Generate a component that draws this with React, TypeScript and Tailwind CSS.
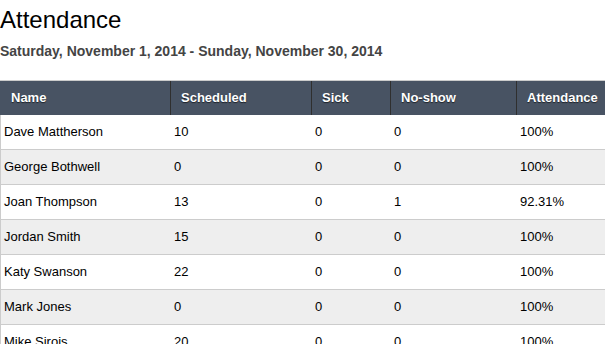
import React from "react";

const rows = [
  ["Dave Mattherson", "10", "0", "0", "100%"],
  ["George Bothwell", "0", "0", "0", "100%"],
  ["Joan Thompson", "13", "0", "1", "92.31%"],
  ["Jordan Smith", "15", "0", "0", "100%"],
  ["Katy Swanson", "22", "0", "0", "100%"],
  ["Mark Jones", "0", "0", "0", "100%"],
  ["Mike Sirois", "20", "0", "0", "100%"],
];

const headers = ["Name", "Scheduled", "Sick", "No-show", "Attendance"];

export default function App() {
  return (
    <div
      className="w-[605px] h-[344px] overflow-hidden bg-white text-black"
      style={{ fontFamily: '"Liberation Sans", Arial, Helvetica, sans-serif' }}
    >
      <h1 className="mt-[6px] text-[24px] leading-[28px] font-normal text-black">Attendance</h1>
      <div className="mt-[7px] text-[14px] leading-[20px] font-bold text-[#444]">
        Saturday, November 1, 2014 - Sunday, November 30, 2014
      </div>
      <div className="mt-[19px] w-[605px]">
        <div className="grid grid-cols-[170px_141px_79px_126px_89px] border-t border-[#cccccc] bg-[#485363] h-[35px] text-white text-[13px] font-bold [text-shadow:0_1px_1px_rgba(0,0,0,0.6)]">
          {headers.map((h, i) => (
            <div
              key={h}
              className={
                i === 0
                  ? "flex items-center pl-[11px]"
                  : "flex items-center pl-[10px] border-l border-[#2f2f2f]"
              }
            >
              {h}
            </div>
          ))}
        </div>
        {rows.map((r, ri) => (
          <div
            key={r[0]}
            className={
              "grid grid-cols-[170px_141px_79px_126px_89px] h-[35px] border-b border-l border-[#cccccc] text-[13px] " +
              (ri % 2 === 1 ? "bg-[#eeeeee]" : "bg-white")
            }
          >
            {r.map((c, ci) => (
              <div key={ci} className="flex items-center pl-[3px]">
                {c}
              </div>
            ))}
          </div>
        ))}
      </div>
    </div>
  );
}
